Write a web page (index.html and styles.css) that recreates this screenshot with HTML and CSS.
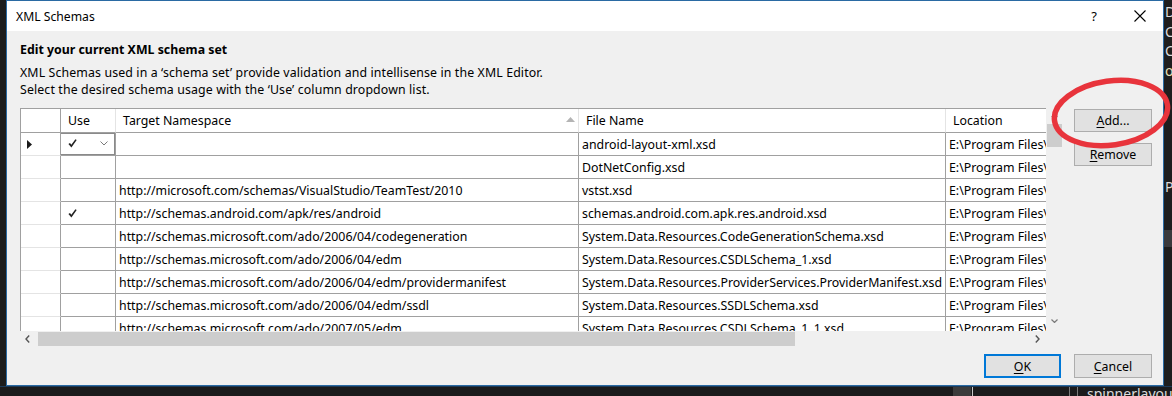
FILE: index.html
```html
<!DOCTYPE html>
<html lang="en">
<head>
<meta charset="utf-8">
<title>XML Schemas</title>
<link rel="stylesheet" href="styles.css">
</head>
<body>
<div class="screen">
  <div class="desk">
    <div class="edge-left"></div>
    <div class="dialog">
      <div class="titlebar">
        <span class="title">XML Schemas</span>
        <span class="tb-btn tb-help">?</span>
        <span class="tb-btn tb-close"><svg width="12" height="12" viewBox="0 0 12 12"><path d="M0.5 0.5 L11.5 11.5 M11.5 0.5 L0.5 11.5" stroke="#000" stroke-width="1.1" fill="none"/></svg></span>
      </div>
      <div class="body">
        <div class="heading">Edit your current XML schema set</div>
        <div class="desc">
          <div>XML Schemas used in a ‘schema set’ provide validation and intellisense in the XML Editor.</div>
          <div>Select the desired schema usage with the ‘Use’ column dropdown list.</div>
        </div>
        <div class="main">
          <div class="grid">
            <div class="grid-top">
              <div class="viewport">
                <table class="table">
                  <colgroup><col class="c-rh"><col class="c-use"><col class="c-ns"><col class="c-file"><col class="c-loc"></colgroup>
                  <thead>
                    <tr>
                      <th class="rh"></th>
                      <th>Use</th>
                      <th><div class="th-sort"><span>Target Namespace</span><svg class="sort" width="9" height="5" viewBox="0 0 9 5"><path d="M0 5 L4.5 0 L9 5 Z" fill="#b4b4b4"/></svg></div></th>
                      <th>File Name</th>
                      <th>Location</th>
                    </tr>
                  </thead>
                  <tbody>
                    <tr>
                      <td class="rh"><svg width="5" height="9" viewBox="0 0 5 9"><path d="M0 0 L5 4.5 L0 9 Z" fill="#1a1a1a"/></svg></td>
                      <td class="use combo"><div class="combo-box"><svg class="check" width="9" height="9" viewBox="0 0 9 9"><path d="M0.4 5.0 L2.0 3.9 L3.3 5.8 L7.4 0.2 L8.7 1.1 L3.4 8.4 Z" fill="#222"/></svg><svg class="chev" width="8" height="5" viewBox="0 0 8 5"><path d="M0.5 0.5 L4 4 L7.5 0.5" stroke="#7a7a7a" stroke-width="1" fill="none"/></svg></div></td>
                      <td></td>
                      <td>android-layout-xml.xsd</td>
                      <td>E:\Program Files\</td>
                    </tr>
                    <tr>
                      <td class="rh"></td><td class="use"></td><td></td>
                      <td>DotNetConfig.xsd</td>
                      <td>E:\Program Files\</td>
                    </tr>
                    <tr>
                      <td class="rh"></td><td class="use"></td>
                      <td>http://microsoft.com/schemas/VisualStudio/TeamTest/2010</td>
                      <td>vstst.xsd</td>
                      <td>E:\Program Files\</td>
                    </tr>
                    <tr>
                      <td class="rh"></td>
                      <td class="use"><svg class="check" width="9" height="9" viewBox="0 0 9 9"><path d="M0.4 5.0 L2.0 3.9 L3.3 5.8 L7.4 0.2 L8.7 1.1 L3.4 8.4 Z" fill="#222"/></svg></td>
                      <td>http://schemas.android.com/apk/res/android</td>
                      <td>schemas.android.com.apk.res.android.xsd</td>
                      <td>E:\Program Files\</td>
                    </tr>
                    <tr>
                      <td class="rh"></td><td class="use"></td>
                      <td>http://schemas.microsoft.com/ado/2006/04/codegeneration</td>
                      <td>System.Data.Resources.CodeGenerationSchema.xsd</td>
                      <td>E:\Program Files\</td>
                    </tr>
                    <tr>
                      <td class="rh"></td><td class="use"></td>
                      <td>http://schemas.microsoft.com/ado/2006/04/edm</td>
                      <td>System.Data.Resources.CSDLSchema_1.xsd</td>
                      <td>E:\Program Files\</td>
                    </tr>
                    <tr>
                      <td class="rh"></td><td class="use"></td>
                      <td>http://schemas.microsoft.com/ado/2006/04/edm/providermanifest</td>
                      <td>System.Data.Resources.ProviderServices.ProviderManifest.xsd</td>
                      <td>E:\Program Files\</td>
                    </tr>
                    <tr>
                      <td class="rh"></td><td class="use"></td>
                      <td>http://schemas.microsoft.com/ado/2006/04/edm/ssdl</td>
                      <td>System.Data.Resources.SSDLSchema.xsd</td>
                      <td>E:\Program Files\</td>
                    </tr>
                    <tr>
                      <td class="rh"></td><td class="use"></td>
                      <td>http://schemas.microsoft.com/ado/2007/05/edm</td>
                      <td>System.Data.Resources.CSDLSchema_1_1.xsd</td>
                      <td>E:\Program Files\</td>
                    </tr>
                  </tbody>
                </table>
              </div>
              <div class="vscroll">
                <svg class="arrow-up" width="7" height="4" viewBox="0 0 7 4"><path d="M0.5 3.5 L3.5 0.5 L6.5 3.5" stroke="#7a7a7a" stroke-width="1" fill="none"/></svg>
                <div class="vthumb"></div>
                <div class="vspace"></div>
                <svg class="arrow-down" width="7" height="4" viewBox="0 0 7 4"><path d="M0.5 0.5 L3.5 3.5 L6.5 0.5" stroke="#7a7a7a" stroke-width="1.2" fill="none"/></svg>
              </div>
            </div>
            <div class="hrow">
              <div class="hscroll">
                <svg class="arrow-left" width="5" height="8" viewBox="0 0 5 8"><path d="M4.2 0.5 L1 4 L4.2 7.5" stroke="#555" stroke-width="1.4" fill="none"/></svg>
                <div class="hthumb"></div>
                <div class="hspace"></div>
                <svg class="arrow-right" width="5" height="8" viewBox="0 0 5 8"><path d="M0.8 0.5 L4 4 L0.8 7.5" stroke="#555" stroke-width="1.4" fill="none"/></svg>
              </div>
              <div class="corner"></div>
            </div>
          </div>
          <div class="side">
            <button class="btn"><u>A</u>dd...</button>
            <button class="btn"><u>R</u>emove</button>
          </div>
        </div>
        <div class="footer">
          <button class="btn btn-ok"><u>O</u>K</button>
          <button class="btn"><u>C</u>ancel</button>
        </div>
      </div>
    </div>
    <div class="edge-right">
      <span class="l1">D</span>
      <span class="l2">C</span>
      <span class="l3">C</span>
      <span class="l4">o.</span>
      <span class="l5">P</span>
      <span class="band"></span>
    </div>
  </div>
  <div class="taskstrip">
    <span class="ts-block"></span>
    <span class="ts-line light"></span>
    <span class="ts-gap"></span>
    <span class="ts-line"></span>
    <span class="ts-line second"></span>
    <span class="ts-text">spinnerlayout.a</span>
  </div>
  <svg class="annot" width="124" height="84" viewBox="0 0 124 84">
    <ellipse cx="63" cy="40" rx="57" ry="32" transform="rotate(-8 63 40)" fill="none" stroke="#e8343c" stroke-width="5.5"/>
  </svg>
</div>
</body>
</html>
```

FILE: styles.css
```css
* { box-sizing: border-box; margin: 0; padding: 0; }
html, body { width: 1172px; height: 396px; overflow: hidden; background: #1e1e1e; }
body { font-family: "Noto Sans", "Open Sans", sans-serif; font-size: 12.35px; color: #000; }

.screen { position: relative; width: 1172px; height: 396px; display: flex; flex-direction: column; background: #1e1e1e; }
.desk { display: flex; height: 386px; }
.edge-left { width: 6px; background: #1c1c1c; flex-shrink: 0; }

.dialog { width: 1158px; height: 386px; flex-shrink: 0; border: 1px solid #2a6aa3; background: #f0f0f0; display: flex; flex-direction: column; }
.titlebar { height: 30px; background: #fff; display: flex; align-items: center; padding-left: 9px; }
.title { flex: 1; font-size: 12.2px; }
.tb-btn { width: 46px; height: 30px; display: flex; align-items: center; justify-content: center; }
.tb-help { font-size: 13px; }

.body { padding: 10px 11px 0 13px; display: flex; flex-direction: column; }
.heading { font-weight: 700; line-height: 17px; height: 17px; }
.desc { margin-top: 6px; line-height: 17px; letter-spacing: 0.12px; }

.main { margin-top: 10px; display: flex; gap: 11px; height: 238px; }
.grid { width: 1043px; display: flex; flex-direction: column; }
.grid-top { display: flex; height: 223px; }
.viewport { width: 1026px; height: 223px; overflow: hidden; background: #fff; border-left: 1px solid #a0a0a0; border-top: 1px solid #a0a0a0; }

.table { border-collapse: separate; border-spacing: 0; table-layout: fixed; width: 1075px; }
.c-rh { width: 40px; }
.c-use { width: 55px; }
.c-ns { width: 463px; }
.c-file { width: 367px; }
.c-loc { width: 150px; }
.table th { height: 24px; font-weight: 400; text-align: left; padding: 0 0 0 7px; border-right: 1px solid #e4e4e4; border-bottom: 1px solid #a0a0a0; white-space: nowrap; }
.table th.rh { border-right: 1px solid #a0a0a0; }
.th-sort { display: flex; align-items: center; justify-content: space-between; padding-right: 3px; }
.sort { margin-top: -3px; }
.table td { height: 23px; padding: 0 0 0 3px; border-right: 1px solid #a0a0a0; border-bottom: 1px solid #a0a0a0; white-space: nowrap; overflow: hidden; }
.table td.rh { border-bottom-color: #e4e4e4; padding-left: 6px; }
.table td.rh svg { display: block; }
.table td.use { padding-left: 7px; }
.table td.use .check { display: block; }
.table td.combo { padding: 0; }
.combo-box { height: 22px; border: 1px solid #8a8a8a; margin: -1px 0 0 -1px; display: flex; align-items: center; justify-content: space-between; padding: 0 6px 0 7px; background: #fff; }

.vscroll { width: 17px; display: flex; flex-direction: column; align-items: center; background: #f0f0f0; }
.arrow-up { margin-top: 5px; }
.vthumb { width: 15px; height: 23px; margin-top: 7px; background: #cdcdcd; }
.vspace { flex: 1; }
.arrow-down { margin-bottom: 8px; }

.hrow { display: flex; height: 15px; }
.hscroll { width: 1026px; display: flex; align-items: center; background: #f0f0f0; }
.arrow-left { margin-left: 5px; }
.hthumb { width: 757px; height: 14px; margin-left: 8px; background: #cdcdcd; }
.hspace { flex: 1; }
.arrow-right { margin-right: 6px; }
.corner { width: 17px; background: #f0f0f0; }

.side { width: 78px; display: flex; flex-direction: column; gap: 11px; padding-top: 1px; }
.btn { font-family: inherit; font-size: 12.35px; color: #000; background: #e1e1e1; border: 1px solid #adadad; height: 23px; width: 78px; display: flex; align-items: center; justify-content: center; }
.btn u { text-decoration-thickness: 1px; text-underline-offset: 2px; }

.footer { margin-top: 8px; display: flex; justify-content: flex-end; gap: 13px; }
.footer .btn { height: 24px; }
.btn-ok { width: 77px; border: 2px solid #0078d7; }

.edge-right { width: 8px; flex-shrink: 0; overflow: hidden; display: flex; flex-direction: column; padding-top: 2px; font-size: 14px; line-height: 19.5px; color: #dcdcdc; padding-left: 1px; }
.edge-right .l4 { color: #e6e0b8; }
.edge-right .l5 { margin-top: 97px; }
.edge-right .band { height: 17px; margin-top: 33px; margin-left: -1px; background: #3a3a3d; }

.taskstrip { height: 10px; display: flex; align-items: stretch; background: #1b1b1c; border-top: 1px solid #1d3a58; padding-left: 953px; overflow: hidden; }
.taskstrip > * { flex-shrink: 0; }
.ts-block { width: 18px; background: #3b3b3b; }
.ts-line { width: 1px; background: #7a7a7a; }
.ts-line.light { background: #c8c8c8; margin-left: 1px; }
.ts-gap { width: 96px; }
.ts-line.second { margin-left: 7px; }
.ts-text { margin-left: 9px; font-size: 14px; line-height: 14px; color: #dcdcdc; white-space: nowrap; }

.annot { position: absolute; left: 1048px; top: 73px; }
```
